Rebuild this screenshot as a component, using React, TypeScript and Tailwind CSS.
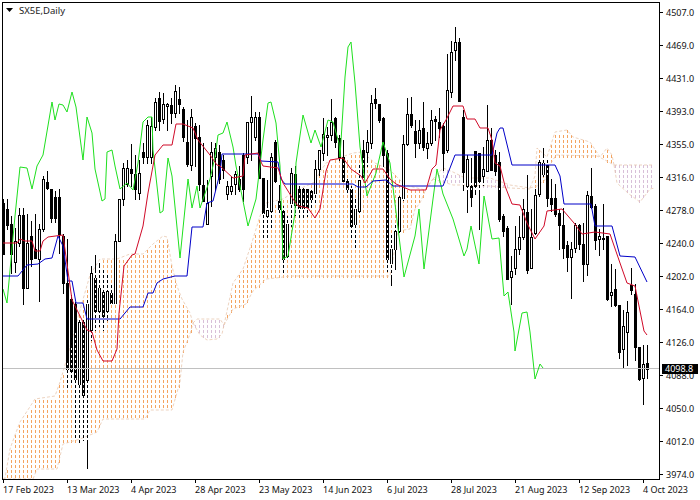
const C: number[][] = [
[199,203,254,254,1],[199,209,225,229,1],[216,224,254,273,1],[228,241,262,272,0],[208,215,243,246,0],[208,215,288,304,1],[214,243,288,288,0],[221,236,259,266,1],[214,249,258,258,1],[224,229,259,301,0],
[176,179,229,231,0],[171,182,188,189,1],[189,189,218,222,1],[191,197,218,222,1],[189,197,234,253,1],[234,236,283,293,1],[239,283,369,387,1],[295,299,371,382,1],[302,304,379,439,1],[318,322,384,442,0],
[318,322,395,440,1],[300,304,380,468,0],[266,273,330,340,0],[255,278,311,330,1],[263,288,311,326,0],[270,292,316,330,1],[275,291,311,320,0],[283,293,303,303,1],[234,241,303,303,0],[199,199,241,241,0],
[163,168,199,205,0],[160,168,184,186,0],[144,169,173,186,1],[155,174,189,199,1],[160,173,193,199,0],[143,152,157,163,1],[120,125,157,163,0],[117,126,157,163,0],[98,102,127,130,0],[92,98,121,130,1],
[93,104,119,123,0],[103,104,106,130,0],[98,105,113,123,1],[85,91,113,117,0],[87,99,104,113,1],[107,109,137,141,1],[120,142,164,166,1],[109,117,165,170,0],[123,126,138,166,1],[125,137,184,190,1],
[143,185,201,201,1],[180,203,224,224,0],[142,152,176,206,0],[143,148,157,190,0],[145,152,179,183,1],[155,160,170,178,1],[181,186,194,199,0],[176,186,191,194,0],[171,174,184,194,0],[166,179,189,191,1],
[153,155,189,201,1],[122,122,157,163,0],[96,117,122,160,0],[112,117,137,140,0],[112,117,178,178,1],[178,178,213,238,1],[180,210,216,238,0],[153,157,211,229,0],[140,142,181,182,1],[185,201,209,213,1],
[206,211,259,273,1],[216,224,256,259,0],[168,173,203,226,0],[166,174,205,215,1],[186,189,208,219,1],[188,189,208,219,1],[189,189,207,216,1],[188,191,199,208,1],[160,169,193,203,0],[150,150,169,175,0],
[118,134,153,160,0],[127,135,137,155,0],[99,122,135,140,0],[117,118,142,147,1],[135,138,157,160,1],[140,157,181,181,1],[179,181,189,193,1],[186,189,226,239,1],[199,209,224,249,0],[163,180,211,213,0],
[140,150,178,180,1],[130,142,152,166,0],[95,103,143,148,0],[88,99,103,108,1],[104,104,120,122,1],[117,118,155,166,1],[150,153,259,271,1],[233,249,263,285,0],[223,231,249,269,0],[196,197,231,233,0],
[135,144,198,200,0],[98,114,144,145,0],[97,114,125,127,1],[120,131,143,157,1],[120,130,143,148,0],[102,128,147,150,1],[132,143,148,158,0],[110,120,143,145,0],[116,119,121,140,1],[108,122,128,137,1],
[123,126,153,170,1],[54,90,150,152,0],[41,52,92,97,0],[27,42,50,60,0],[38,42,101,101,1],[110,117,172,190,1],[155,159,186,212,0],[158,186,197,206,1],[151,151,186,194,1],[153,153,181,229,1],
[147,169,176,185,0],[105,140,171,171,0],[128,140,170,170,1],[150,155,171,175,1],[152,162,219,221,1],[214,216,231,236,1],[226,228,279,279,1],[256,271,277,304,0],[226,249,268,274,0],[216,237,249,254,0],
[199,209,237,239,0],[175,212,270,273,1],[209,237,268,268,0],[189,195,233,234,0],[158,162,194,196,0],[148,163,174,176,0],[160,165,198,206,1],[179,198,204,211,1],[184,198,214,216,1],[209,213,225,249,1],
[208,225,248,258,1],[241,245,257,271,1],[242,249,257,298,0],[223,225,248,252,0],[224,225,244,249,1],[223,244,264,281,1],[191,195,264,275,0],[168,196,207,208,1],[204,206,240,249,1],[229,236,239,255,0],
[204,238,239,249,1],[236,236,299,300,1],[264,292,295,306,0],[269,289,305,306,1],[305,305,352,358,1],[310,326,349,367,0],[301,312,332,365,0],[268,285,290,294,1],[284,294,347,360,1],[347,347,379,380,1],
[345,364,378,404,0],[345,363,369,378,1],
];

type P = number[][];
const SANDY = "#f4a460";
const THISTLE = "#d8bfd8";
const Cloud: { c: string; up: P; lo: P }[] = [
  { c: SANDY, up: [[3,479],[5,478],[10,449],[15,435],[20,422],[35,399],[55,396],[60,382],[65,365],[80,310],[90,275],[100,259],[117,259],[130,254],[143,254],[153,244],[163,236],[167,237],[172,266],[177,286],[182,299],[190,313],[193,323]],
    lo: [[3,479],[33,479],[37,469],[57,469],[63,444],[80,439],[90,435],[97,432],[103,419],[145,419],[150,410],[172,410],[180,382],[183,352],[190,334],[193,323]] },
  { c: THISTLE, up: [[193,323],[197,319],[220,319],[224,325]], lo: [[193,323],[200,335],[207,340],[217,339],[222,334],[224,325]] },
  { c: SANDY, up: [[224,325],[233,283],[243,269],[253,239],[260,216],[266,203],[283,199],[299,189],[313,183],[326,163],[333,160],[353,153],[362,152],[375,163],[390,170],[405,185],[425,190],[433,179]],
    lo: [[224,325],[233,309],[246,304],[253,291],[266,279],[276,278],[290,276],[390,276],[398,231],[410,229],[415,209],[420,203],[426,189],[433,179]] },
  { c: THISTLE, up: [[433,179],[443,168],[453,172],[465,178],[490,178],[510,185],[530,188]], lo: [[433,179],[443,182],[453,185],[465,185],[490,186],[510,188],[530,189]] },
  { c: SANDY, up: [[530,188],[535,176],[537,148],[547,157],[555,132],[567,130],[573,137],[590,142],[600,157],[607,148],[612,155],[614,165]],
    lo: [[530,188],[537,186],[545,180],[550,165],[556,155],[597,156],[605,160],[614,165]] },
  { c: THISTLE, up: [[614,165],[654,165]], lo: [[614,165],[617,183],[629,194],[640,202],[650,189],[655,188]] },
];

const interp = (pts: P, x: number) => {
  for (let i = 1; i < pts.length; i++) {
    if (x <= pts[i][0]) {
      const [a, b] = [pts[i - 1], pts[i]];
      return a[1] + ((b[1] - a[1]) * (x - a[0])) / Math.max(1, b[0] - a[0]);
    }
  }
  return pts[pts.length - 1][1];
};
const poly = (pts: P) => pts.map((p) => `${p[0]},${p[1]}`).join(" ");

const dots: { x: number; y: number; c: string }[] = [];
for (const s of Cloud) {
  const x0 = s.up[0][0];
  const x1 = s.up[s.up.length - 1][0];
  for (let x = 3; x <= 659; x += 4) {
    if (x < x0 || x >= x1) continue;
    const a = interp(s.up, x);
    const b = Math.min(interp(s.lo, x), 476);
    for (let y = Math.ceil(a / 5) * 5; y < b; y += 5) dots.push({ x, y, c: s.c });
  }
}
const inCloud = new Map<number, number[]>();
for (const d of dots) {
  if (!inCloud.has(d.x)) inCloud.set(d.x, []);
  inCloud.get(d.x)!.push(d.y);
}

const Tenkan: P = [[3,243],[17,243],[20,239],[25,241],[32,241],[35,251],[40,251],[43,241],[48,237],[63,235],[72,300],[87,330],[92,332],[97,350],[103,361],[112,361],[117,349],[119,313],[124,266],[132,255],[135,254],[143,226],[148,193],[155,155],[163,145],[172,145],[176,124],[183,124],[193,128],[198,140],[210,155],[217,165],[220,166],[233,178],[243,176],[245,155],[258,153],[261,162],[263,166],[278,168],[283,183],[293,199],[298,206],[308,208],[315,218],[320,209],[326,171],[330,160],[343,158],[351,169],[361,176],[365,183],[373,169],[383,169],[390,179],[396,184],[410,190],[426,190],[432,169],[436,165],[440,130],[446,120],[453,106],[463,106],[467,119],[475,119],[480,128],[488,128],[492,140],[495,163],[500,166],[505,186],[512,204],[520,205],[527,223],[535,239],[544,226],[547,211],[562,209],[574,223],[582,234],[595,232],[610,234],[620,263],[627,283],[635,286],[644,331],[647,335]];
const Kijun: P = [[3,276],[18,276],[27,265],[38,264],[45,259],[52,258],[58,236],[63,246],[68,281],[72,281],[76,303],[83,303],[87,319],[120,319],[130,307],[143,307],[148,293],[153,293],[157,283],[163,279],[175,276],[187,276],[192,227],[203,227],[207,203],[213,201],[220,173],[222,154],[258,154],[261,161],[278,162],[281,179],[285,184],[353,184],[358,187],[366,187],[373,181],[386,180],[393,186],[443,186],[450,168],[455,155],[492,155],[497,133],[500,128],[503,128],[512,165],[555,165],[560,176],[564,204],[591,204],[595,226],[612,226],[620,256],[635,257],[647,282]];
const Chikou: P = [[3,289],[7,303],[15,216],[20,167],[27,168],[32,189],[37,166],[43,155],[52,102],[55,120],[59,104],[63,105],[67,112],[72,92],[76,107],[83,160],[87,117],[92,133],[95,169],[102,201],[105,199],[107,152],[112,150],[115,166],[120,189],[127,183],[133,190],[138,163],[143,122],[148,117],[152,117],[153,150],[160,213],[163,211],[168,158],[172,176],[180,258],[188,179],[192,208],[197,186],[200,208],[210,179],[215,157],[218,135],[223,133],[227,122],[233,147],[236,166],[248,226],[256,199],[263,140],[268,103],[271,102],[276,123],[280,166],[283,259],[288,256],[295,213],[296,163],[303,115],[311,143],[315,130],[321,147],[328,120],[333,122],[339,143],[340,157],[345,77],[348,47],[351,42],[355,83],[360,147],[367,196],[376,173],[383,142],[390,163],[404,277],[415,236],[419,209],[424,269],[433,199],[437,169],[443,194],[453,219],[464,256],[467,249],[471,226],[479,264],[484,196],[492,239],[499,238],[504,296],[508,292],[514,332],[515,351],[522,313],[527,312],[530,332],[535,379],[540,364],[543,368]];

const Prices = ["4507.0","4469.0","4431.0","4393.0","4355.0","4316.0","4278.0","4240.0","4202.0","4164.0","4126.0","4088.0","4050.0","4012.0","3974.0"];
const Dates = ["17 Feb 2023","13 Mar 2023","4 Apr 2023","28 Apr 2023","23 May 2023","14 Jun 2023","6 Jul 2023","28 Jul 2023","21 Aug 2023","12 Sep 2023","4 Oct 2023"];

function Chart() {
  return (
    <svg width="656" height="476" viewBox="3 3 656 476" className="block">
      <g>
        {dots.map((d, i) => (
          <rect key={i} x={d.x} y={d.y} width={1} height={3} fill={d.c} />
        ))}
      </g>
      {Cloud.map((s, i) => (
        <g key={i} fill="none" stroke="#e8c8b0" strokeWidth="0.8" strokeDasharray="3 2">
          <polyline points={poly(s.up)} />
          <polyline points={poly(s.lo)} />
        </g>
      ))}
      {C.map((c, i) => {
        const x = 3 + 4 * i;
        const ys = (inCloud.get(x) || []).filter((y) => y + 3 >= c[0] && y + 3 <= c[3]);
        return (
          <g key={i}>
            <rect x={x} y={c[0]} width={1} height={c[3] - c[0] + 1} fill="#000" />
            <rect x={x - 0.5} y={c[1] + 0.5} width={2} height={Math.max(1, c[2] - c[1])} fill={c[4] ? "#000" : "#fff"} stroke="#000" />
            {ys.map((y) => (
              <rect key={y} x={x} y={y + 3} width={1} height={2} fill="#fff" />
            ))}
          </g>
        );
      })}
      <rect x={3} y={368} width={656} height={1} fill="#c0c0c0" />
      <g fill="none" strokeWidth="1">
        <polyline points={poly(Chikou)} stroke="#1fe01f" />
        <polyline points={poly(Kijun)} stroke="#0000c8" />
        <polyline points={poly(Tenkan)} stroke="#d00a28" />
      </g>
    </svg>
  );
}

export default function App() {
  return (
    <div className="w-[700px] h-[500px] bg-white overflow-hidden pl-[2px] pt-[2px] font-['Noto_Sans',sans-serif] text-[9px] text-[#111]">
      <div className="flex h-[478px]">
        <div className="relative w-[658px] h-[478px] border border-black shrink-0">
          <Chart />
          <div className="absolute left-[3px] top-[2px] flex items-center gap-[5px] text-[#222] leading-[11px]">
            <svg width="8" height="5" viewBox="0 0 8 5" className="block">
              <path d="M0 0 H7 L3.5 4 Z" fill="#000" />
            </svg>
            <span className="text-[9.5px]">SX5E,Daily</span>
          </div>
        </div>
        <div className="relative flex flex-col pt-[10px] w-[40px] h-[478px]">
          {Prices.map((p) => (
            <div key={p} className="flex items-start h-[33px] shrink-0">
              <div className="w-[3px] h-px bg-black" />
              <span className="ml-[3px] -mt-[5px] leading-[11px]">{p}</span>
            </div>
          ))}
          <div className="absolute left-[2px] top-[362px] w-[36px] h-[10px] bg-black text-white leading-[10px] pl-[3px]">4098.8</div>
        </div>
      </div>
      <div className="flex pl-px">
        {Dates.map((d) => (
          <div key={d} className="w-[64px] shrink-0 flex flex-col">
            <div className="w-px h-[3px] bg-black" />
            <span className="leading-[11px] mt-px whitespace-nowrap">{d}</span>
          </div>
        ))}
      </div>
    </div>
  );
}
